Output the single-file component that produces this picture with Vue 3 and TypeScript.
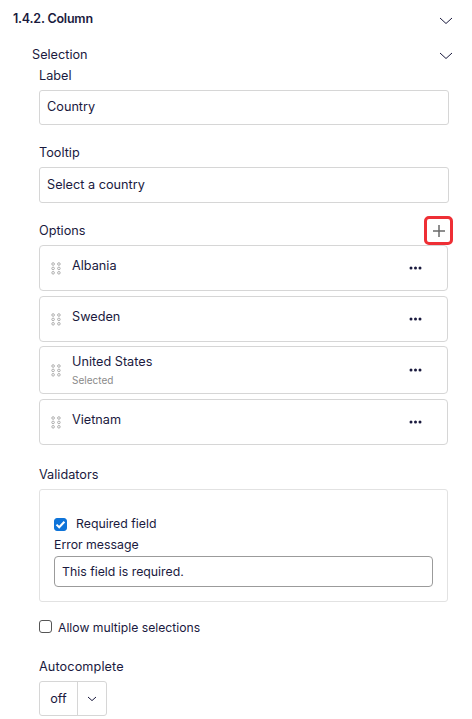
<script setup lang="ts">
interface Option {
  name: string;
  note?: string;
}

const options: Option[] = [
  { name: "Albania" },
  { name: "Sweden" },
  { name: "United States", note: "Selected" },
  { name: "Vietnam" },
];
const gripDots = [0, 1, 2, 3, 4, 5];
</script>

<template>
  <div class="panel">
    <div class="section-head">
      <strong>1.4.2. Column</strong>
      <svg class="chevron" width="14" height="8" viewBox="0 0 14 8"><path d="M1 1l6 5.5L13 1" /></svg>
    </div>

    <div class="sub-head">
      <span>Selection</span>
      <svg class="chevron" width="14" height="8" viewBox="0 0 14 8"><path d="M1 1l6 5.5L13 1" /></svg>
    </div>

    <div class="form">
      <label class="field-label first">Label</label>
      <div class="input">Country</div>

      <label class="field-label tooltip">Tooltip</label>
      <div class="input tall">Select a country</div>

      <div class="options-head">
        <span>Options</span>
        <button class="add-btn" type="button">
          <svg width="14" height="14" viewBox="0 0 14 14"><path d="M7 1v12M1 7h12" /></svg>
        </button>
      </div>

      <div class="option-list">
        <div v-for="option in options" :key="option.name" class="option" :class="{ 'has-note': option.note }">
          <svg class="grip" width="10" height="13" viewBox="0 0 10 13">
            <circle v-for="i in gripDots" :key="i" :cx="i % 2 ? 7.9 : 2.1" :cy="2 + Math.floor(i / 2) * 4.4" r="1.3" />
          </svg>
          <div class="option-text">
            <div>{{ option.name }}</div>
            <div v-if="option.note" class="note">{{ option.note }}</div>
          </div>
          <svg class="dots" width="13" height="4" viewBox="0 0 13 4">
            <circle cx="2" cy="2" r="1.5" />
            <circle cx="6.5" cy="2" r="1.5" />
            <circle cx="11" cy="2" r="1.5" />
          </svg>
        </div>
      </div>

      <label class="field-label validators">Validators</label>
      <div class="validator-box">
        <div class="check-row">
          <span class="checkbox checked">
            <svg width="11" height="11" viewBox="0 0 11 11"><path d="M1.5 5.6l2.7 2.7 5.2-5.6" /></svg>
          </span>
          <span>Required field</span>
        </div>
        <label class="error-label">Error message</label>
        <div class="input dark">This field is required.</div>
      </div>

      <div class="multi-row">
        <span class="checkbox"></span>
        <span class="multi-text">Allow multiple selections</span>
      </div>

      <label class="field-label auto">Autocomplete</label>
      <div class="select">
        <span class="select-value">off</span>
        <span class="select-arrow">
          <svg width="10" height="6" viewBox="0 0 10 6"><path d="M1 1l4 3.6L9 1" /></svg>
        </span>
      </div>
    </div>
  </div>
</template>

<style>
body {
  background: #fff;
}
</style>

<style scoped>
.panel {
  width: 472px;
  height: 719px;
  overflow: hidden;
  font-family: Inter, "Liberation Sans", sans-serif;
  font-size: 12.7px;
  line-height: 16px;
  color: #1a1a3e;
  box-sizing: border-box;
  padding-top: 11px;
}

.section-head,
.sub-head {
  display: flex;
  justify-content: space-between;
  align-items: center;
  padding-right: 19px;
}

.section-head {
  padding-left: 13px;
  font-size: 12.5px;
  letter-spacing: -0.2px;
}

.section-head strong {
  font-weight: 600;
}

.sub-head {
  padding-left: 32px;
  padding-top: 1px;
  margin-top: 19px;
}

.chevron {
  margin-top: 3px;
}

.sub-head .chevron {
  margin-top: 1px;
}

.chevron path {
  fill: none;
  stroke: #1a1a3e;
  stroke-width: 1;
}

.form {
  padding-left: 39px;
  width: 410px;
}

.field-label {
  display: block;
  padding-top: 1px;
}

.first {
  margin-top: 4px;
}

.tooltip {
  margin-top: 19px;
}

.input {
  margin-top: 6px;
  height: 35px;
  box-sizing: border-box;
  border: 1px solid #d6d6d6;
  border-radius: 3px;
  padding: 0 7px 2px;
  display: flex;
  align-items: center;
}

.tall {
  height: 36px;
  padding-bottom: 0;
}

.options-head {
  display: flex;
  justify-content: space-between;
  align-items: center;
  margin-top: 13px;
  height: 29px;
  margin-right: -4px;
}

.add-btn {
  width: 29px;
  height: 29px;
  box-sizing: border-box;
  padding: 0;
  background: #fff;
  border: 3px solid #ee2f35;
  border-radius: 5px;
  display: flex;
  align-items: center;
  justify-content: center;
}

.add-btn path {
  stroke: #6a6a6a;
  stroke-width: 1.5;
}

.option-list {
  display: flex;
  flex-direction: column;
  gap: 5px;
  margin-right: 1px;
}

.option {
  height: 46px;
  box-sizing: border-box;
  border: 1px solid #d6d6d6;
  border-radius: 4px;
  padding: 0 25px 0 11px;
  display: flex;
  align-items: center;
}

.option.has-note {
  height: 48px;
  margin-top: -1px;
}

.grip {
  fill: none;
  stroke: #9a9a9a;
  stroke-width: 0.8;
  margin-right: 11px;
}

.option-text {
  flex: 1;
  padding-bottom: 4px;
}

.has-note .option-text {
  padding-bottom: 0;
}

.note {
  margin-top: 4px;
  font-size: 10px;
  line-height: 12px;
  color: #8a8a8a;
}

.dots {
  fill: #1a1a3e;
}

.validators {
  margin-top: 21px;
}

.validator-box {
  margin-top: 6px;
  height: 113px;
  box-sizing: border-box;
  border: 1px solid #e2e2e2;
  border-radius: 3px;
  padding: 26px 14px 0;
  margin-right: 1px;
  font-size: 12.3px;
}

.check-row,
.multi-row {
  display: flex;
  align-items: center;
}

.check-row .checkbox {
  margin-right: 9px;
}

.checkbox {
  width: 13px;
  height: 13px;
  box-sizing: border-box;
  border: 1px solid #555;
  border-radius: 3px;
  display: flex;
  align-items: center;
  justify-content: center;
  background: #fff;
}

.checkbox.checked {
  background: #0f74d9;
  border-color: #0f74d9;
}

.checkbox path {
  fill: none;
  stroke: #fff;
  stroke-width: 2;
}

.error-label {
  display: block;
  padding-top: 1px;
  margin-top: 4px;
}

.validator-box .input {
  margin-top: 3px;
  height: 31px;
  border-color: #9b9b9b;
  border-radius: 4px;
  font-size: 12.3px;
  padding-bottom: 0;
}

.multi-row {
  margin-top: 16px;
  gap: 6px;
  font-size: 12.2px;
}

.multi-row .checkbox {
  margin-bottom: 2px;
}

.multi-text {
  padding-top: 2px;
}

.auto {
  margin-top: 22px;
  letter-spacing: 0.1px;
}

.select {
  margin-top: 6px;
  width: 68px;
  height: 35px;
  box-sizing: border-box;
  border: 1px solid #d6d6d6;
  border-radius: 3px;
  display: flex;
  align-items: center;
}

.select-value {
  width: 38px;
  height: 100%;
  display: flex;
  align-items: center;
  justify-content: center;
  border-right: 1px solid #d6d6d6;
  box-sizing: border-box;
}

.select-arrow {
  flex: 1;
  display: flex;
  justify-content: center;
}

.select-arrow path {
  fill: none;
  stroke: #1a1a3e;
  stroke-width: 1;
}
</style>
